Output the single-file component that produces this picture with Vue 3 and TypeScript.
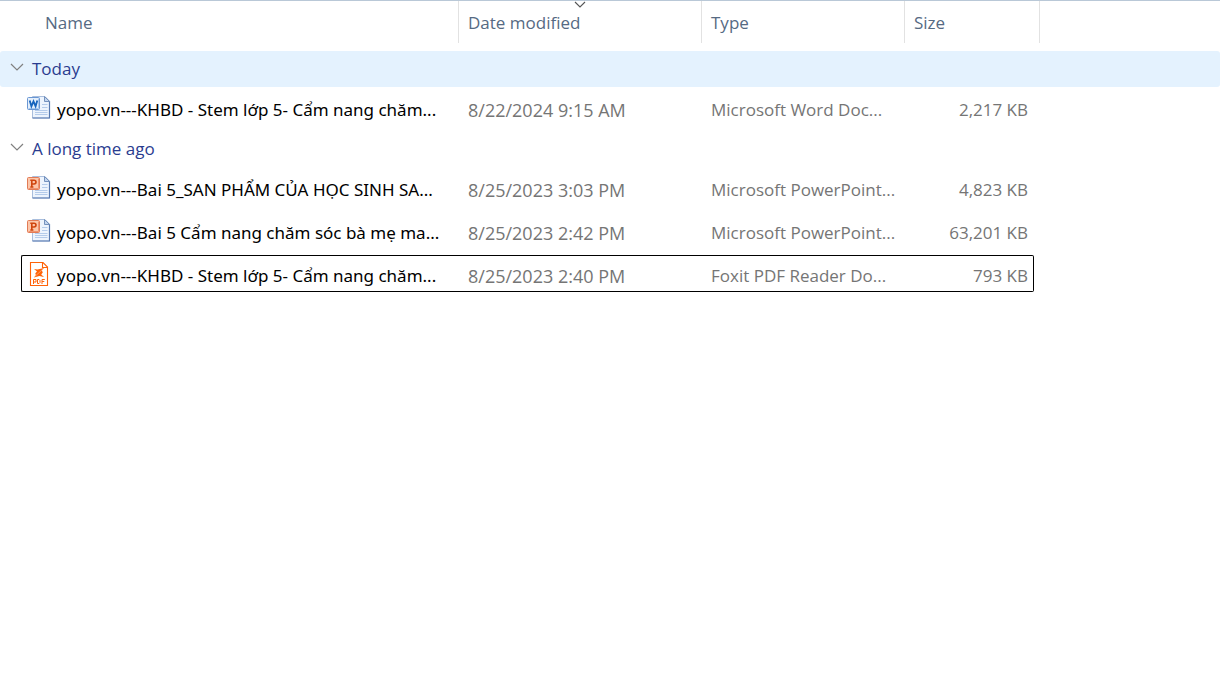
<script setup lang="ts">
import { reactive } from 'vue'

type FileKind = 'word' | 'powerpoint' | 'pdf'

interface FileEntry {
  name: string
  modified: string
  type: string
  size: string
  kind: FileKind
  focused?: boolean
}

interface FileGroup {
  title: string
  highlighted: boolean
  open: boolean
  files: FileEntry[]
}

const groups = reactive<FileGroup[]>([
  {
    title: 'Today',
    highlighted: true,
    open: true,
    files: [
      { name: 'yopo.vn---KHBD - Stem lớp 5- Cẩm nang chăm...', modified: '8/22/2024 9:15 AM', type: 'Microsoft Word Doc...', size: '2,217 KB', kind: 'word' },
    ],
  },
  {
    title: 'A long time ago',
    highlighted: false,
    open: true,
    files: [
      { name: 'yopo.vn---Bai 5_SAN PHẨM CỦA HỌC SINH SA...', modified: '8/25/2023 3:03 PM', type: 'Microsoft PowerPoint...', size: '4,823 KB', kind: 'powerpoint' },
      { name: 'yopo.vn---Bai 5 Cẩm nang chăm sóc bà mẹ ma...', modified: '8/25/2023 2:42 PM', type: 'Microsoft PowerPoint...', size: '63,201 KB', kind: 'powerpoint' },
      { name: 'yopo.vn---KHBD - Stem lớp 5- Cẩm nang chăm...', modified: '8/25/2023 2:40 PM', type: 'Foxit PDF Reader Do...', size: '793 KB', kind: 'pdf', focused: true },
    ],
  },
])
</script>

<template>
  <main class="explorer">
    <table class="files">
      <colgroup>
        <col class="col-name" />
        <col class="col-date" />
        <col class="col-type" />
        <col class="col-size" />
        <col />
      </colgroup>
      <thead>
        <tr>
          <th scope="col"><button type="button" class="head head-name">Name</button></th>
          <th scope="col" aria-sort="descending">
            <button type="button" class="head">
              <svg class="sort" width="12" height="7" viewBox="0 0 12 7" aria-hidden="true">
                <path d="M1 1 6 6 11 1" fill="none" stroke="#555" stroke-width="1.1" />
              </svg>
              Date modified
            </button>
          </th>
          <th scope="col"><button type="button" class="head">Type</button></th>
          <th scope="col"><button type="button" class="head">Size</button></th>
          <td></td>
        </tr>
      </thead>
      <tbody v-for="group in groups" :key="group.title">
        <tr>
          <th colspan="5" scope="rowgroup" class="group-cell">
            <button
              type="button"
              class="group"
              :class="{ highlighted: group.highlighted }"
              :aria-expanded="group.open"
              @click="group.open = !group.open"
            >
              <svg class="chevron" :class="{ closed: !group.open }" width="14" height="8" viewBox="0 0 14 8" aria-hidden="true">
                <path d="M1 1 7 7 13 1" fill="none" stroke="#808080" stroke-width="1.2" />
              </svg>
              {{ group.title }}
            </button>
          </th>
        </tr>
        <template v-if="group.open">
          <tr v-for="file in group.files" :key="file.modified" :class="{ focused: file.focused }">
            <td>
              <div class="cell cell-name">
                <svg v-if="file.kind === 'pdf'" class="icon" width="24" height="26" viewBox="0 0 24 26" aria-hidden="true">
                  <path d="M3.5 1.5H16L20.5 6V24.5H3.5Z" fill="#fff" stroke="#ff6208" stroke-width="1.1" />
                  <path d="M15.5 1.5V6.5H20.5" fill="none" stroke="#ff6208" stroke-width="1.1" />
                  <path d="M7 8 10.5 8.6 17 7 14.9 9.6 15.8 11.4 14.2 13.6 17 16 12.3 14.9 7 16.5 8.8 14 8.3 12.2 10 10.4Z" fill="#ff6208" />
                  <path d="M8 15.4 15.8 8.2" stroke="#fff" stroke-width="0.4" />
                  <path d="M6.5 23V18.5H9V21H6.5M10.5 18.5H12L13 19.5V21.5L12 22.5H10.5ZM15 23V18.5H17.8M15 20.5H17.3" fill="none" stroke="#ff6208" />
                </svg>
                <svg v-else class="icon" width="24" height="26" viewBox="0 0 24 26" aria-hidden="true">
                  <path d="M5.5 1.5H18L22.5 6V23H5.5Z" fill="#edf4fd" stroke="#a9bedd" />
                  <path d="M22.5 6V23H5.5" fill="none" stroke="#5779b0" stroke-width="1.2" />
                  <path d="M17.5 1.5V6.5H22.5Z" fill="#c3d6ef" stroke="#7592bd" />
                  <path d="M15 9.5H20.5M15 12.5H20.5M8 15.5H20.5M8 17.5H20.5M8 19.5H20.5" stroke="#b4cbea" />
                  <template v-if="file.kind === 'word'">
                    <rect x="0.5" y="2.5" width="12" height="12" rx="1" fill="#e4effc" stroke="#6a97d3" />
                    <path d="M1.5 13.5H11.5V3.5" fill="none" stroke="#a9c8ee" />
                    <path d="M2.7 5.5 4.4 11.3 6.5 6.3 8.6 11.3 10.3 5.5" fill="none" stroke="#1764bd" stroke-width="1.8" />
                  </template>
                  <template v-else>
                    <rect x="0.5" y="2.5" width="12" height="12" rx="1" fill="#fcc7ab" stroke="#e27b55" />
                    <path d="M1.5 13.5H11.5V3.5" fill="none" stroke="#ef936e" />
                    <path d="M4.8 12.5V5.3H7Q9 5.3 9 7.1Q9 9 7 9H4.8M3.3 12H6.4M3.3 5.3H5" fill="none" stroke="#cf450e" stroke-width="1.6" />
                  </template>
                </svg>
                <span>{{ file.name }}</span>
              </div>
            </td>
            <td><div class="cell cell-date">{{ file.modified }}</div></td>
            <td><div class="cell">{{ file.type }}</div></td>
            <td><div class="cell cell-size">{{ file.size }}</div></td>
            <td></td>
          </tr>
        </template>
      </tbody>
    </table>
  </main>
</template>

<style>
body {
  margin: 0;
  background: #fff;
}
</style>

<style scoped>
.explorer {
  min-height: 100vh;
  box-sizing: border-box;
  border-top: 1px solid #b9c8d7;
  font-family: "Open Sans", "Noto Sans", sans-serif;
  font-size: 17px;
  line-height: 24px;
  color: #757575;
}
.files {
  width: 100%;
  table-layout: fixed;
  border-collapse: collapse;
}
.col-name { width: 459px; }
.col-date { width: 243px; }
.col-type { width: 203px; }
.col-size { width: 135px; }
th,
td {
  padding: 0;
  font-weight: 400;
  text-align: left;
  white-space: nowrap;
}
button {
  margin: 0;
  border: 0;
  background: none;
  font: inherit;
  text-align: left;
}
thead th {
  padding-bottom: 8px;
}
.head {
  position: relative;
  display: block;
  box-sizing: border-box;
  width: 100%;
  height: 42px;
  padding: 2px 9px 0;
  border-right: 1px solid #e2e2e2;
  color: #566a83;
}
.head-name {
  padding-left: 45px;
}
.sort {
  position: absolute;
  top: 0;
  left: 50%;
  margin-left: -6px;
}
.group-cell {
  padding-bottom: 1px;
}
.group {
  display: flex;
  align-items: center;
  gap: 8px;
  width: 100%;
  height: 36px;
  padding: 0 10px;
  border-radius: 3px;
  color: #2a3c8f;
}
.group.highlighted {
  background: #e4f2fe;
}
.chevron {
  margin-bottom: 4px;
}
.chevron.closed {
  transform: rotate(-90deg);
}
.cell {
  display: flex;
  align-items: center;
  box-sizing: border-box;
  height: 37px;
  margin: 1px 0 5px;
  padding-top: 4px;
  padding-left: 9px;
  border: 0 solid transparent;
  border-width: 1px 0;
}
.cell-name {
  margin-left: 21px;
  padding-left: 5px;
  border-left-width: 1px;
  border-radius: 2px 0 0 2px;
  font-family: "Noto Sans", "Open Sans", sans-serif;
  color: #000;
}
.cell-date {
  font-size: 18px;
}
.cell-size {
  justify-content: flex-end;
  margin-right: 6px;
  padding-right: 5px;
  border-right-width: 1px;
  border-radius: 0 2px 2px 0;
}
.focused .cell {
  border-color: #000;
}
.icon {
  flex: none;
  margin-right: 6px;
  margin-bottom: 4px;
}
</style>
